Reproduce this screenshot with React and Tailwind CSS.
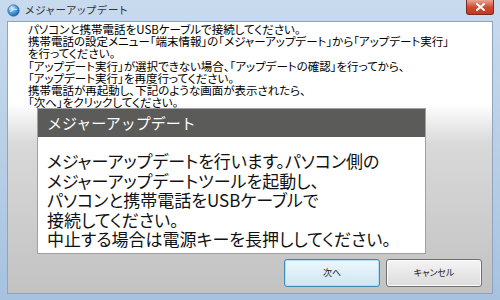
import React from 'react';

const jp = "font-['Meiryo_UI','Noto_Sans_CJK_JP',sans-serif]";
const palt = "[font-feature-settings:'palt']";

function TitleBar() {
  return (
    <div className="flex h-[21px] items-start justify-between">
      <div className="flex items-center gap-[5px] pl-[7px] pt-[4px]">
        <svg width="13" height="13" viewBox="0 0 16 16">
          <defs>
            <radialGradient id="g" cx="0.35" cy="0.3" r="0.8">
              <stop offset="0" stopColor="#dff1ff" />
              <stop offset="0.5" stopColor="#4a9ee0" />
              <stop offset="1" stopColor="#1c5aa3" />
            </radialGradient>
          </defs>
          <circle cx="8" cy="8" r="7" fill="url(#g)" stroke="#2a5f9e" strokeWidth="0.8" />
          <path d="M4 9.5 Q8 5 12.5 6.5" stroke="#ffffff" strokeWidth="1.2" fill="none" opacity="0.8" />
        </svg>
        <span className={`${jp} ${palt} text-[10.5px] tracking-[1px] text-[#333] leading-none`}>メジャーアップデート</span>
      </div>
      <div className="mr-[6px] flex h-[15px] w-[28px] items-center justify-center rounded-b-[3px] border border-t-0 border-[#7a2a22] bg-gradient-to-b from-[#e8a596] via-[#cf4a31] to-[#c23a22]">
        <svg width="9" height="8" viewBox="0 0 9 8">
          <path d="M1 1 L8 7 M8 1 L1 7" stroke="#fff" strokeWidth="2" strokeLinecap="square" />
        </svg>
      </div>
    </div>
  );
}

function Button({ label, focused }) {
  return (
    <div
      className={
        'flex h-[28px] w-[96px] items-center justify-center rounded-[3px] border text-[9px] text-[#222] ' +
        jp + ' ' + palt +
        (focused
          ? ' border-[#3c8bb8] bg-gradient-to-b from-[#eef7fc] to-[#cfe6f3] shadow-[inset_0_0_0_1px_#aee0f5]'
          : ' border-[#707070] bg-gradient-to-b from-[#f4f4f4] to-[#dcdcdc] shadow-[inset_0_0_0_1px_#fcfcfc]')
      }
    >
      {label}
    </div>
  );
}

export default function App() {
  const steps = [
    'パソコンと携帯電話をUSBケーブルで接続してください。',
    '携帯電話の設定メニュー「端末情報」の「メジャーアップデート」から「アップデート実行」',
    'を行ってください。',
    '「アップデート実行」が選択できない場合、「アップデートの確認」を行ってから、',
    '「アップデート実行」を再度行ってください。',
    '携帯電話が再起動し、下記のような画面が表示されたら、',
    '「次へ」をクリックしてください。',
  ];
  const body = [
    'メジャーアップデートを行います。パソコン側の',
    'メジャーアップデートツールを起動し、',
    'パソコンと携帯電話をUSBケーブルで',
    '接続してください。',
    '中止する場合は電源キーを長押ししてください。',
  ];

  return (
    <div className="flex h-[300px] w-[500px] flex-col overflow-hidden bg-gradient-to-b from-[#c8daee] via-[#b9cfe6] to-[#a6c2df]">
      <TitleBar />
      <div className="mx-[7px] mb-[6px] flex flex-1 flex-col border border-[#8ea3bd] bg-gradient-to-b from-white from-[30%] via-[#d9d9d9] via-[45%] to-[#c2c2c2]">
        <div className={`${jp} ${palt} whitespace-nowrap pl-[20px] pt-[1px] text-[11.5px] leading-[12.2px] text-black`}>
          {steps.map((s, i) => (
            <div key={i}>{s}</div>
          ))}
        </div>
        <div className="ml-[29px] w-[389px] border border-[#a0a0a0] bg-white">
          <div className={`${jp} flex h-[28px] items-center bg-[#5b5b59] pl-[9px] text-[15px] text-white`}>
            メジャーアップデート
          </div>
          <div className={`${jp} ${palt} whitespace-nowrap px-[9px] pb-[5px] pt-[14px] text-[17px] leading-[19.4px] text-[#111]`}>
            {body.map((s, i) => (
              <div key={i}>{s}</div>
            ))}
          </div>
        </div>
        <div className="flex flex-1 items-center justify-end gap-[6px] pb-[2px] pr-[10px]">
          <Button label="次へ" focused />
          <Button label="キャンセル" />
        </div>
      </div>
    </div>
  );
}
